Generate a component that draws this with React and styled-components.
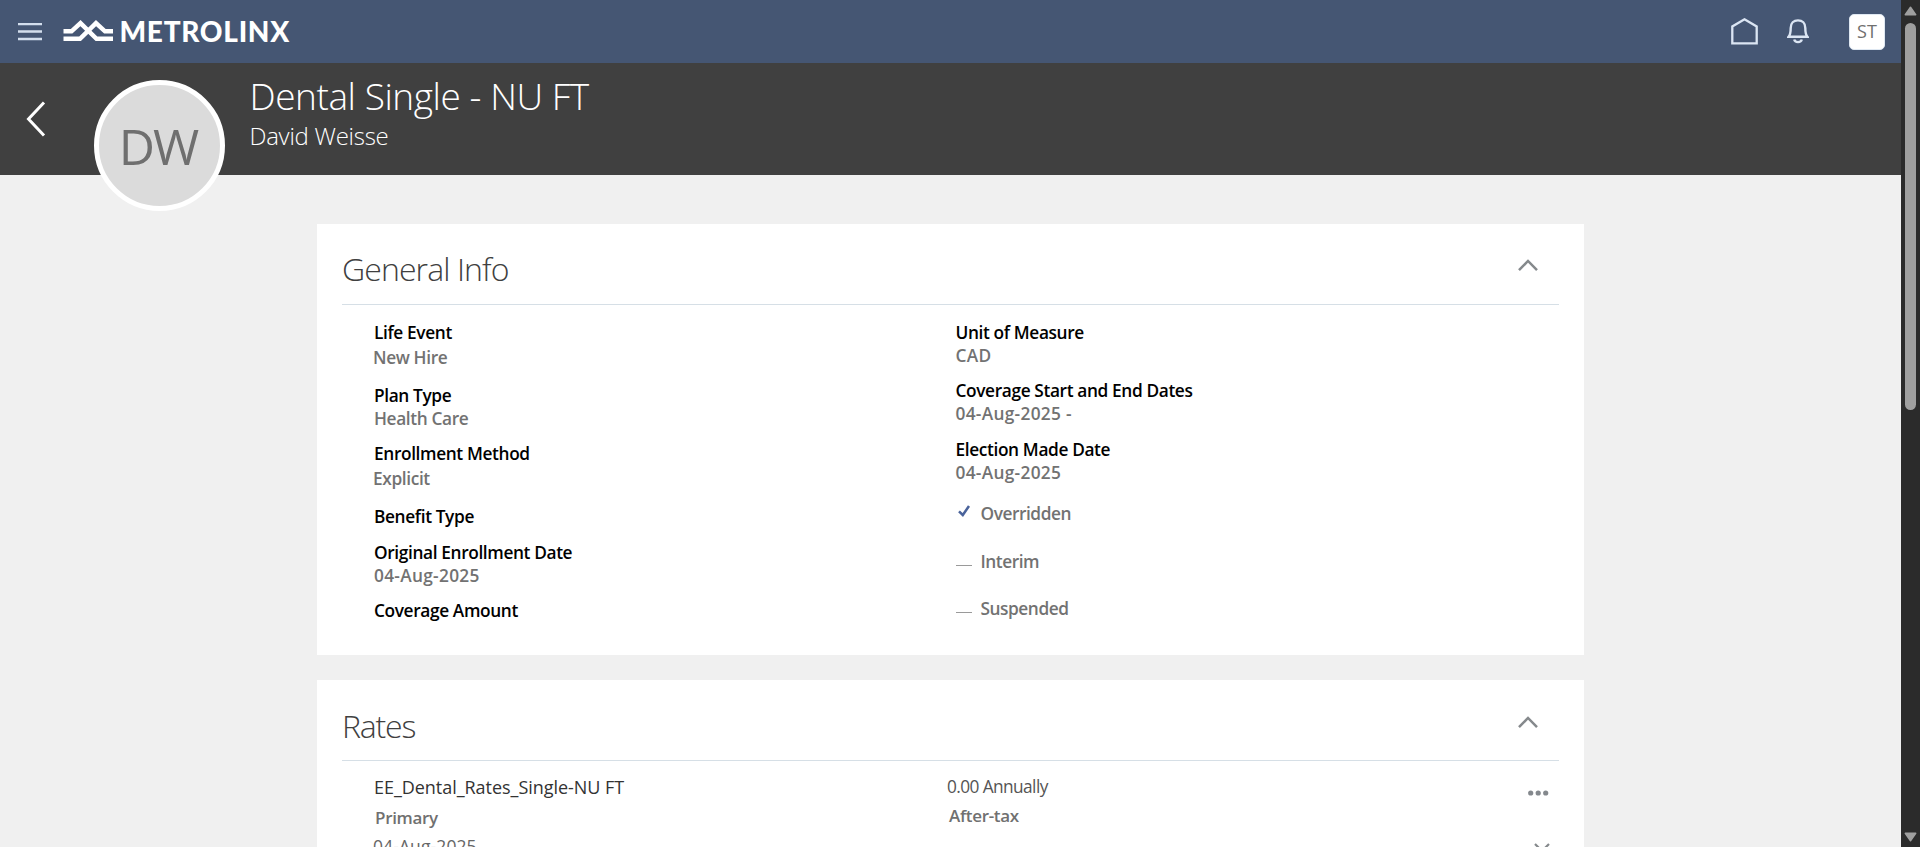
import React from "react";
import styled, { createGlobalStyle } from "styled-components";

const GlobalStyle = createGlobalStyle`
  * { box-sizing: border-box; }
  body { margin: 0; overflow: hidden; font-family: "Open Sans", "Noto Sans", sans-serif; }
  h1, h2, p { margin: 0; font-weight: inherit; }
  svg { display: block; flex: none; }
`;

const Window = styled.div`
  display: flex;
  height: 847px;
  overflow: hidden;
  background: #f0f0f0;
  white-space: nowrap;
`;

const Page = styled.div`
  flex: 1;
  min-width: 0;
`;

const TopBar = styled.header`
  display: flex;
  align-items: center;
  height: 63px;
  padding: 0 16px 0 18px;
  background: #455673;
`;

const Brand = styled.div`
  display: flex;
  align-items: center;
  margin: 0 0 2px 20px;
  color: #fff;
`;

const BrandName = styled.span`
  margin-left: 5.5px;
  font: 900 28px/34px Lato, sans-serif;
  letter-spacing: 0.72px;
`;

const TopActions = styled.div`
  display: flex;
  align-items: center;
  margin-left: auto;
`;

const BellWrap = styled.div`
  margin: 0 40px 0 29px;
`;

const UserBadge = styled.div`
  width: 36px;
  height: 36px;
  border: 1px solid #dfe8f2;
  border-radius: 5px;
  background: #fff;
  color: #6f6f6f;
  font-size: 18px;
  line-height: 33px;
  text-align: center;
`;

const PersonBar = styled.section`
  display: flex;
  align-items: flex-start;
  height: 112px;
  padding-left: 26px;
  background: #404040;
`;

const BackIcon = styled.svg`
  margin-top: 38px;
`;

const Avatar = styled.div`
  position: relative;
  width: 131px;
  height: 131px;
  margin: 17px 0 0 48px;
  padding-right: 3px;
  border: 5px solid #fff;
  border-radius: 50%;
  background: #dbdbdb;
  color: #6f6f6f;
  font-size: 50px;
  line-height: 123px;
  letter-spacing: -2px;
  text-align: center;
`;

const Heading = styled.div`
  margin: 11px 0 0 24.5px;
  color: #fff;
  font-weight: 300;
`;

const Title = styled.h1`
  font-size: 37px;
  line-height: 44px;
  letter-spacing: -0.44px;
`;

const Subtitle = styled.p`
  margin-top: 3px;
  font-size: 24px;
  line-height: 30px;
  letter-spacing: -0.27px;
`;

const Cards = styled.main`
  display: flex;
  flex-direction: column;
  gap: 25px;
  width: 1267px;
  margin: 49px 0 0 317px;
`;

const Card = styled.section`
  height: 431px;
  padding: 0 25px;
  background: #fff;
`;

const CardHeader = styled.div`
  display: flex;
  justify-content: space-between;
  height: 81px;
  padding: ${(p) => p.$top || 25}px 21px 0 0;
  border-bottom: 1px solid #d6dfe6;
`;

const CardTitle = styled.h2`
  color: #404040;
  font-size: 32px;
  font-weight: 300;
  line-height: 40px;
  letter-spacing: ${(p) => p.$tracking || "-0.9px"};
`;

const CollapseIcon = styled.svg`
  margin-top: 10px;
`;

const Columns = styled.div`
  display: flex;
  padding: 17px 0 0 32px;
`;

const Column = styled.div`
  width: 581.5px;
`;

const Field = styled.div`
  margin-bottom: ${(p) => p.$after}px;
  font-size: 17.3px;
  font-weight: 560;
  line-height: 22px;
  letter-spacing: -0.37px;
`;

const Label = styled.div`
  color: #000;
`;

const Value = styled.div`
  margin: ${(p) => (p.$editable ? "3px 0 0 -1px" : "1px 0 0")};
  color: #727272;
  letter-spacing: ${(p) => (p.$digits ? "0.3px" : "inherit")};
`;

const Flag = styled.div`
  display: flex;
  align-items: flex-start;
  gap: 8px;
  margin-top: ${(p) => p.$before}px;
  color: #727272;
  font-size: 17.3px;
  font-weight: 560;
  line-height: 22px;
  letter-spacing: -0.45px;
`;

const RateRow = styled.div`
  display: flex;
  padding: 14px 0 0 31px;
`;

const RateMain = styled.div`
  width: 574px;
  font-size: 18px;
  line-height: 24px;
`;

const RateName = styled.p`
  margin-left: 1px;
  color: #333;
  letter-spacing: -0.04px;
`;

const RateTag = styled.p`
  margin: ${(p) => p.$gap}px 0 0 2px;
  color: #707070;
  font-size: 17px;
  font-weight: 600;
  line-height: 22px;
  letter-spacing: -0.32px;
`;

const RateDate = styled.p`
  margin-top: 5px;
  color: #666;
  font-size: 17.5px;
  letter-spacing: 0.1px;
`;

const RateAmount = styled.div`
  width: 581px;
`;

const Amount = styled.p`
  display: flex;
  gap: 4px;
  color: #555;
  font-size: 17.3px;
  font-weight: 400;
  line-height: 24px;
  letter-spacing: -0.6px;
`;

const RateActions = styled.div`
  display: flex;
  flex-direction: column;
  gap: 46px;
  margin-top: 15px;
`;

const ScrollTrack = styled.div`
  display: flex;
  flex-direction: column;
  align-items: center;
  width: 19px;
  padding: 6px 0 5px;
  background: #2b2b2b;
`;

const ScrollThumb = styled.div`
  width: 11px;
  height: 387px;
  margin: 7px 0 auto;
  border-radius: 6px;
  background: #9f9f9f;
`;

const MenuIcon = () => (
  <svg width="25" height="18" viewBox="0 0 25 18" stroke="#d3deed" strokeWidth="2.4">
    <path d="M0 1H24M0 8.5H24M0 16H24" />
  </svg>
);

const MountainIcon = () => (
  <svg width="51" height="22" viewBox="0 0 51 22" fill="none" stroke="currentColor" strokeWidth="4.5">
    <path d="M0.5 11.3H8.5L17.5 3.2L33.5 18.8H50" />
    <path d="M0.5 18.8H17L33 3.2L42 11.3H50" />
  </svg>
);

const HomeIcon = () => (
  <svg width="27" height="27" viewBox="0 0 27 27" fill="none" stroke="#dbe5f3" strokeWidth="2.3">
    <path d="M1.3 25.4V8.5L13.5 1.3L25.7 8.5V25.4Z" />
  </svg>
);

const BellIcon = () => (
  <svg width="22" height="25" viewBox="0 0 22 25" fill="none" stroke="#dbe5f3" strokeWidth="2.4">
    <path d="M1.6 17.8H20.4C18.6 15.6 18.3 13.4 18.3 9C18.3 4.1 15.3 1.4 11 1.4S3.7 4.1 3.7 9C3.7 13.4 3.4 15.6 1.6 17.8Z" />
    <path d="M7.2 20.6C8 24 14 24 14.8 20.6" />
  </svg>
);

const Collapse = () => (
  <CollapseIcon width="20" height="13" viewBox="0 0 20 13" fill="none" stroke="#85898c" strokeWidth="2.5">
    <path d="M1 11.2L10 2L19 11.2" />
  </CollapseIcon>
);

const StateIcon = ({ on }) =>
  on ? (
    <svg width="17" height="22" viewBox="0 0 17 22" fill="none" stroke="#4a639b" strokeWidth="2.5">
      <path d="M3 8.3L6.8 12L13 3" />
    </svg>
  ) : (
    <svg width="17" height="22" viewBox="0 0 17 22" stroke="#9a9a9a">
      <path d="M0 14.5H16" />
    </svg>
  );

const leftFields = [
  { label: "Life Event", value: "New Hire", editable: true, after: 16 },
  { label: "Plan Type", value: "Health Care", after: 13 },
  { label: "Enrollment Method", value: "Explicit", editable: true, after: 16 },
  { label: "Benefit Type", after: 14 },
  { label: "Original Enrollment Date", value: "04-Aug-2025", digits: true, after: 13 },
  { label: "Coverage Amount", after: 0 },
];

const rightFields = [
  { label: "Unit of Measure", value: "CAD", digits: true, after: 13 },
  { label: "Coverage Start and End Dates", value: "04-Aug-2025 -", digits: true, after: 14 },
  { label: "Election Made Date", value: "04-Aug-2025", digits: true, after: 0 },
];

const flags = [
  { name: "Overridden", on: true, before: 19 },
  { name: "Interim", before: 26 },
  { name: "Suspended", before: 25 },
];

const Fields = ({ items }) =>
  items.map((f) => (
    <Field key={f.label} $after={f.after}>
      <Label>{f.label}</Label>
      {f.value && (
        <Value $editable={f.editable} $digits={f.digits}>
          {f.value}
        </Value>
      )}
    </Field>
  ));

export default function App() {
  return (
    <Window>
      <GlobalStyle />
      <Page>
        <TopBar>
          <MenuIcon />
          <Brand>
            <MountainIcon />
            <BrandName>METROLINX</BrandName>
          </Brand>
          <TopActions>
            <HomeIcon />
            <BellWrap>
              <BellIcon />
            </BellWrap>
            <UserBadge>ST</UserBadge>
          </TopActions>
        </TopBar>
        <PersonBar>
          <BackIcon width="20" height="36" viewBox="0 0 20 36" fill="none" stroke="#fff" strokeWidth="3">
            <path d="M18 1.5L2.5 18L18 34.5" />
          </BackIcon>
          <Avatar>DW</Avatar>
          <Heading>
            <Title>Dental Single - NU FT</Title>
            <Subtitle>David Weisse</Subtitle>
          </Heading>
        </PersonBar>
        <Cards>
          <Card>
            <CardHeader>
              <CardTitle>General Info</CardTitle>
              <Collapse />
            </CardHeader>
            <Columns>
              <Column>
                <Fields items={leftFields} />
              </Column>
              <Column>
                <Fields items={rightFields} />
                {flags.map((f) => (
                  <Flag key={f.name} $before={f.before}>
                    <StateIcon on={f.on} />
                    {f.name}
                  </Flag>
                ))}
              </Column>
            </Columns>
          </Card>
          <Card>
            <CardHeader $top={26}>
              <CardTitle $tracking="-1.2px">Rates</CardTitle>
              <Collapse />
            </CardHeader>
            <RateRow>
              <RateMain>
                <RateName>EE_Dental_Rates_Single-NU FT</RateName>
                <RateTag $gap={8}>Primary</RateTag>
                <RateDate>04-Aug-2025</RateDate>
              </RateMain>
              <RateAmount>
                <Amount>
                  <span>0.00</span>
                  <span>Annually</span>
                </Amount>
                <RateTag $gap={6}>After-tax</RateTag>
              </RateAmount>
              <RateActions>
                <svg width="21" height="6" viewBox="0 0 21 6" fill="#84888d">
                  <circle cx="2.7" cy="3" r="2.6" />
                  <circle cx="10.2" cy="3" r="2.6" />
                  <circle cx="17.7" cy="3" r="2.6" />
                </svg>
                <svg width="22" height="12" viewBox="0 0 22 12" fill="none" stroke="#85898c" strokeWidth="2.2">
                  <path d="M7 2L14 9L21 2" />
                </svg>
              </RateActions>
            </RateRow>
          </Card>
        </Cards>
      </Page>
      <ScrollTrack>
        <svg width="13" height="10" viewBox="0 0 13 10" fill="#9f9f9f" stroke="#9f9f9f" strokeWidth="1.5" strokeLinejoin="round">
          <path d="M1.3 8.7L6.5 1.3L11.7 8.7Z" />
        </svg>
        <ScrollThumb />
        <svg width="13" height="10" viewBox="0 0 13 10" fill="#9f9f9f" stroke="#9f9f9f" strokeWidth="1.5" strokeLinejoin="round">
          <path d="M1.3 1.3H11.7L6.5 8.7Z" />
        </svg>
      </ScrollTrack>
    </Window>
  );
}
